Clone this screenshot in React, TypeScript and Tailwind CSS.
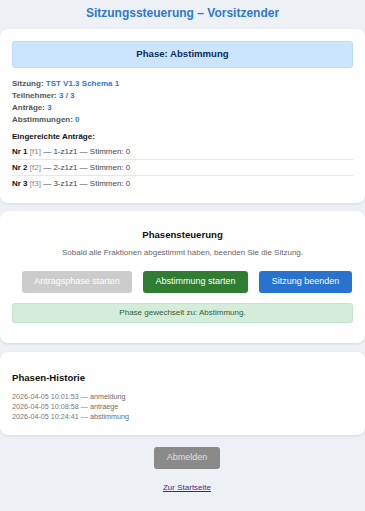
import React from "react";

export default function App() {
  const rows = [
    { nr: "Nr 1", f: "[f1]", t: "1-z1z1" },
    { nr: "Nr 2", f: "[f2]", t: "2-z1z1" },
    { nr: "Nr 3", f: "[f3]", t: "3-z1z1" },
  ];
  const hist = [
    { ts: "2026-04-05 10:01:53", p: "anmeldung" },
    { ts: "2026-04-05 10:08:58", p: "antraege" },
    { ts: "2026-04-05 10:24:41", p: "abstimmung" },
  ];
  return (
    <div
      className="min-h-[511px] w-[365px] bg-[#edf1f5] text-[#333]"
      style={{ fontFamily: '"Liberation Sans", Arial, sans-serif' }}
    >
      <h1 className="pt-[5px] text-center text-[12px] font-bold leading-[16px] text-[#2f78d0]">
        Sitzungssteuerung – Vorsitzender
      </h1>

      <div className="mt-[8px] rounded-[8px] bg-white px-[12px] pt-[12px] pb-[11px] shadow-[0_1px_3px_rgba(0,0,0,0.1)]">
        <div className="flex h-[27px] items-center justify-center rounded-[3px] border border-[#b8daff] bg-[#cce5ff] text-[9.6px] font-bold text-[#0b2e5c]">
          Phase: Abstimmung
        </div>
        <div className="mt-[10px] text-[8px] font-bold leading-[12px] text-[#555]">
          <div>
            Sitzung: <span className="text-[#2f78d0]">TST V1.3 Schema 1</span>
          </div>
          <div>
            Teilnehmer: <span className="text-[#2f78d0]">3 / 3</span>
          </div>
          <div>
            Anträge: <span className="text-[#2f78d0]">3</span>
          </div>
          <div>
            Abstimmungen: <span className="text-[#2f78d0]">0</span>
          </div>
        </div>
        <div className="mt-[5px] text-[8px] font-bold leading-[12px] text-[#111]">
          Eingereichte Anträge:
        </div>
        <div className="mt-[1px]">
          {rows.map((r, i) => (
            <div
              key={r.nr}
              className={
                "flex h-[16px] items-center text-[8px] text-[#444] " +
                (i < rows.length - 1 ? "border-b border-[#e6e6e6]" : "")
              }
            >
              <span className="font-bold text-[#111]">{r.nr}</span>
              <span className="whitespace-pre text-[#888]"> {r.f}</span>
              <span className="whitespace-pre"> — {r.t} — Stimmen: 0</span>
            </div>
          ))}
        </div>
      </div>

      <div className="mt-[8px] rounded-[8px] bg-white px-[12px] pt-[18px] pb-[20px] shadow-[0_1px_3px_rgba(0,0,0,0.1)]">
        <h2 className="text-center text-[9.6px] font-bold leading-[12px] text-[#111]">
          Phasensteuerung
        </h2>
        <p className="mt-[6px] text-center text-[8px] leading-[12px] text-[#666]">
          Sobald alle Fraktionen abgestimmt haben, beenden Sie die Sitzung.
        </p>
        <div className="mt-[12px] flex justify-center gap-[11px] pl-[9px]">
          <button className="h-[22px] w-[110px] rounded-[3px] bg-[#cccccc] text-[9px] text-white">
            Antragsphase starten
          </button>
          <button className="h-[22px] w-[105px] rounded-[3px] bg-[#2e7d32] text-[9px] text-white">
            Abstimmung starten
          </button>
          <button className="h-[22px] w-[93px] rounded-[3px] bg-[#2872d0] text-[9px] text-white">
            Sitzung beenden
          </button>
        </div>
        <div className="mt-[10px] flex h-[20px] items-center justify-center rounded-[3px] border border-[#c3e6cb] bg-[#d4edda] text-[8px] text-[#2f5d3a]">
          Phase gewechselt zu: Abstimmung.
        </div>
      </div>

      <div className="mt-[9px] rounded-[8px] bg-white px-[12px] pt-[20px] pb-[13px] shadow-[0_1px_3px_rgba(0,0,0,0.1)]">
        <h2 className="text-[9.6px] font-bold leading-[12px] text-[#111]">Phasen-Historie</h2>
        <div className="mt-[8px] text-[7.2px] leading-[10px] text-[#777]">
          {hist.map((h) => (
            <div key={h.ts}>
              {h.ts} — <span className="text-[#6b6b6b]">{h.p}</span>
            </div>
          ))}
        </div>
      </div>

      <div className="mt-[12px] flex justify-center pl-[9px]">
        <button className="h-[22px] w-[66px] rounded-[3px] bg-[#8a8a8a] text-[9px] text-[#e0e0e0]">
          Abmelden
        </button>
      </div>
      <div className="mt-[4px] pl-[9px] text-center">
        <a href="#" className="text-[8px] text-[#551a8b] underline">
          Zur Startseite
        </a>
      </div>
    </div>
  );
}
